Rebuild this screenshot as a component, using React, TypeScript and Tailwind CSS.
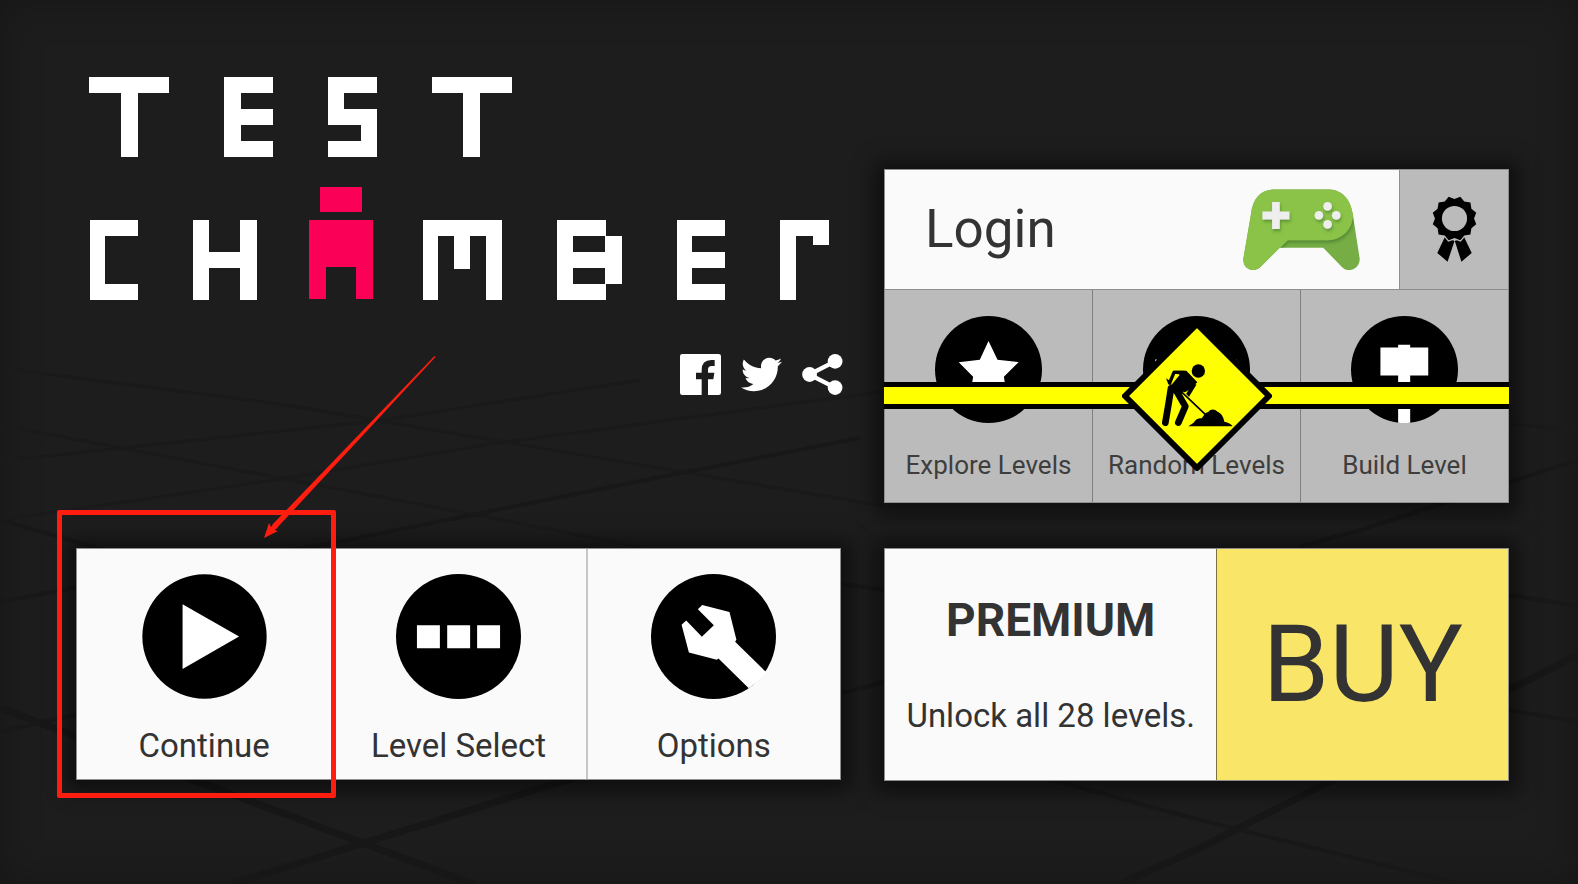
import type { ReactNode } from "react";
import { FaTwitter } from "react-icons/fa";

type Block = [x: number, y: number, w: number, h: number];

/* Block wordmark, laid out on a 16-unit stroke. */
const WHITE_BLOCKS: Block[] = [
  // T
  [89, 77, 80, 16], [121, 92, 17, 65],
  // E
  [224, 77, 17, 80], [224, 77, 49, 16], [224, 109, 49, 16], [224, 141, 49, 16],
  // S
  [328, 77, 48, 16], [328, 77, 16, 48], [328, 109, 48, 16], [361, 109, 16, 48], [328, 141, 48, 16], [361, 77, 16, 16],
  // T
  [432, 77, 80, 16], [463, 92, 17, 65],
  // C
  [90, 220, 15, 80], [90, 220, 48, 16], [90, 284, 48, 16],
  // H
  [193, 220, 16, 80], [240, 220, 17, 80], [193, 252, 64, 16],
  // M
  [423, 220, 79, 16], [423, 220, 15, 80], [454, 220, 16, 49], [486, 220, 16, 80],
  // B
  [557, 220, 16, 80], [557, 220, 49, 16], [557, 252, 49, 16], [557, 284, 49, 16], [605, 236, 17, 48],
  // E
  [677, 220, 15, 80], [677, 220, 48, 16], [677, 252, 48, 16], [677, 284, 48, 16],
  // R
  [780, 220, 16, 80], [780, 220, 49, 16], [813, 220, 16, 25],
];

const PINK_BLOCKS: Block[] = [
  [320, 187, 42, 25],
  [309, 220, 64, 47],
  [309, 220, 17, 79],
  [356, 220, 17, 79],
];

function Logo() {
  return (
    <h1 aria-label="Test Chamber">
      <svg viewBox="89 76 740 224" className="block h-auto w-full" shapeRendering="crispEdges" aria-hidden="true">
        {WHITE_BLOCKS.map(([x, y, w, h], i) => (
          <rect key={i} x={x} y={y} width={w} height={h} fill="#fff" />
        ))}
        {PINK_BLOCKS.map(([x, y, w, h], i) => (
          <rect key={i} x={x} y={y} width={w} height={h} fill="#fa0056" />
        ))}
      </svg>
    </h1>
  );
}

/* Faint perspective grid on the floor of the chamber. */
function Floor() {
  return (
    <svg
      viewBox="0 0 1578 884"
      preserveAspectRatio="none"
      className="pointer-events-none absolute inset-0 h-full w-full"
      fill="none"
      stroke="#171717"
      aria-hidden="true"
    >
      <g strokeWidth="7">
        <path d="M0 708L473 884M232 884L554 784L760 722" />
        <path d="M1120 884L1200 848L1327 783L1509 690L1578 655" />
      </g>
      <g strokeWidth="4" stroke="#181818">
        <path d="M1000 766L1200 820L1460 884M0 732L74 715L300 655M1509 710L1578 722" />
        <path d="M0 520L94 547L250 590M0 602L74 588L348 540L620 485L860 438" />
        <path d="M1509 595L1578 606M842 693L884 682M842 584L884 590M1300 547L1360 530L1510 482L1578 460" />
      </g>
      <g strokeWidth="3" stroke="#1a1a1a">
        <path d="M0 425L280 478L482 516L640 547M0 520L268 481L491 444L700 416L880 392" />
        <path d="M0 461L384 420L640 380M0 368L280 404L700 475L884 506" />
        <path d="M1509 424L1578 430" />
      </g>
    </svg>
  );
}

function FacebookIcon() {
  return (
    <svg viewBox="840 552 123 123" className="size-[41px]" aria-hidden="true">
      <rect x="840" y="552" width="123" height="123" rx="7" fill="#fff" />
      <path
        fill="#1c1c1c"
        d="M905 608v-8q0-30 29-30h10v18h-9q-11 0-11 11v9h19l-3 20h-16v47h-19v-47h-17v-20z"
      />
    </svg>
  );
}

function ShareIcon() {
  return (
    <svg viewBox="1205 553 121 122" className="size-[41px]" aria-hidden="true">
      <path d="M1303 575L1226 614L1303 653" fill="none" stroke="#fff" strokeWidth="13" />
      <circle cx="1303" cy="575" r="22" fill="#fff" />
      <circle cx="1227" cy="614" r="22" fill="#fff" />
      <circle cx="1303" cy="653" r="22" fill="#fff" />
    </svg>
  );
}

function PlayIcon() {
  return (
    <svg viewBox="0 0 376 376" className="size-[125px]" aria-hidden="true">
      <circle cx="188" cy="188" r="187" />
      <path d="M122 91L292 188L122 286z" fill="#fff" />
    </svg>
  );
}

function LevelsIcon() {
  return (
    <svg viewBox="0 0 376 376" className="size-[125px]" aria-hidden="true">
      <circle cx="188" cy="188" r="188" />
      <path d="M63 154h69v69h-69zM154 154h69v69h-69zM244 154h69v69h-69z" fill="#fff" />
    </svg>
  );
}

function WrenchIcon() {
  return (
    <svg viewBox="631 132 376 376" className="size-[125px]" aria-hidden="true">
      <circle cx="819" cy="320" r="188" />
      <path
        fill="#fff"
        d="M785 225L867 246L888 330L884 336L977 427Q955 457 925 476L834 386L829 390L745 368L723 285L737 272L784 321L820 286L772 238z"
      />
    </svg>
  );
}

function StarIcon() {
  return (
    <svg viewBox="0 0 320 320" className="size-[107px]" aria-hidden="true">
      <circle cx="160" cy="160" r="160" />
      <path fill="#fff" d="M160 75L187 131L250 138L206 182L216 244L160 214L104 244L114 182L71 138L134 131z" />
    </svg>
  );
}

function RandomIcon() {
  return (
    <svg viewBox="0 0 320 320" className="size-[107px]" aria-hidden="true">
      <circle cx="160" cy="160" r="160" />
      <path fill="#ccc" d="M36 130h7l-6 7zM274 130h7v8z" />
    </svg>
  );
}

function BuildIcon() {
  return (
    <svg viewBox="0 0 320 320" className="size-[107px]" aria-hidden="true">
      <circle cx="160" cy="160" r="160" />
      <path fill="#fff" d="M141 86h36v8h54v84h-54v141q-18 2-36 0V178H88V94h53z" />
    </svg>
  );
}

function GamepadIcon() {
  return (
    <svg viewBox="128 117 350 244" className="w-[117px]" aria-hidden="true">
      <defs>
        <filter id="pad-shadow" x="-20%" y="-20%" width="150%" height="150%">
          <feDropShadow dx="3" dy="7" stdDeviation="5" floodColor="#33691e" floodOpacity="0.5" />
        </filter>
        <clipPath id="pad-clip">
          <path d="M152 190C158 140 185 118 225 118H382C425 118 450 150 456 190L477 325C479 354 445 372 424 350L368 293H238L180 350C158 370 126 356 129 325z" />
        </clipPath>
      </defs>
      <g clipPath="url(#pad-clip)">
        <path fill="#76ad45" d="M120 110h370v260H120z" />
        <path
          fill="#8bc34a"
          filter="url(#pad-shadow)"
          d="M152 190C158 140 185 118 225 118H382C432 118 457 160 457 194C457 236 425 270 382 270H262L180 350C158 370 126 356 129 325z"
        />
      </g>
      <g fill="#eee" filter="url(#pad-shadow)">
        <path d="M215 156h23v28h29v24h-29v29h-23v-29h-29v-24h29z" />
        <circle cx="381" cy="169" r="13" />
        <circle cx="355" cy="196" r="13" />
        <circle cx="407" cy="196" r="13" />
        <circle cx="381" cy="223" r="13" />
      </g>
    </svg>
  );
}

const ROSETTE = Array.from({ length: 24 }, (_, i) => {
  const angle = ((i * 15 - 90) * Math.PI) / 180;
  const r = i % 2 === 1 ? 68 : 59;
  return `${(131 + r * Math.cos(angle)).toFixed(1)},${(104 + r * Math.sin(angle)).toFixed(1)}`;
}).join(" ");

function AwardIcon() {
  return (
    <svg viewBox="60 36 142 202" className="w-[47px]" aria-hidden="true">
      <path d="M102 160L131 172L110 235L79 208zM160 160L132 172L152 235L183 208z" />
      <polygon points={ROSETTE} stroke="#bbb" strokeWidth="8" />
      <polygon points={ROSETTE} />
      <circle cx="131" cy="104" r="38" fill="#bbb" />
    </svg>
  );
}

function RoadworkSign() {
  return (
    <svg viewBox="63 30 450 453" className="h-[151px] w-[150px]" aria-hidden="true">
      <path d="M288 42L504 258L288 474L72 258z" fill="#ff0" stroke="#000" strokeWidth="18" strokeLinejoin="round" />
      <g transform="translate(150 135)">
        <circle cx="142" cy="48" r="20" />
        <path d="M66 47H106L139 82L112 106L84 122L50 106L66 84L86 60z" />
        <path d="M45 70L52 74L58 78L62 90L52 88z" />
        <g fill="none" stroke="#000" strokeLinejoin="round">
          <path d="M56 84L69 52H100" strokeWidth="10" strokeLinecap="round" />
          <path d="M131 86L108 124" strokeWidth="12" />
          <path d="M60 100L53 145L43 203" strokeWidth="20" strokeLinecap="round" />
          <path d="M74 104L103 154L82 203" strokeWidth="20" strokeLinecap="round" />
          <path d="M96 112L166 184" stroke="#ff0" strokeWidth="7" />
          <path d="M94 113L166 181" strokeWidth="5" />
        </g>
        <path d="M112 214L128 203Q136 189 152 190L164 174Q172 172 178 165Q190 161 200 170Q216 176 220 200Q238 203 245 214z" />
      </g>
    </svg>
  );
}

/* Red marker that points at the first tile. */
function Highlight() {
  return (
    <>
      <span className="pointer-events-none absolute -top-[39px] -right-[5px] -bottom-[19px] -left-[20px] z-10 rounded-xs border-[5px] border-[#ff1d10]" />
      <svg
        viewBox="0 0 173 184"
        className="pointer-events-none absolute -top-[194px] left-[186px] z-10 h-[184px] w-[173px]"
        fill="#ff1d10"
        aria-hidden="true"
      >
        <path d="M171.500 1L172.500 2L13 174L9 170z" />
        <path d="M1 183L6 168L8 172L12 168L15 172L11.500 175L15 176z" />
      </svg>
    </>
  );
}

function Tile({ label, icon, className = "", children }: { label: string; icon: ReactNode; className?: string; children?: ReactNode }) {
  return (
    <div className="relative flex-1">
      <button
        type="button"
        className={`flex h-full w-full flex-col items-center bg-[#fafafa] pt-[25px] text-[33px] leading-10 text-[#333] ${className}`}
      >
        {icon}
        <span className="mt-[27px]">{label}</span>
      </button>
      {children}
    </div>
  );
}

function SmallTile({ label, icon, className = "" }: { label: string; icon: ReactNode; className?: string }) {
  return (
    <button
      type="button"
      className={`flex flex-1 flex-col items-center bg-[#bbb] pt-[26px] text-[26px] leading-8 text-[#3e3e3e] ${className}`}
    >
      {icon}
      <span className="mt-[26px] whitespace-nowrap">{label}</span>
    </button>
  );
}

const PANEL = "border border-[#8e8e8e] shadow-[0_2px_18px_9px_rgba(0,0,0,0.5)]";

export default function App() {
  return (
    <main className="relative min-h-screen overflow-hidden bg-[#1d1d1d] pt-[76px] pr-[69px] pb-[103px] pl-[76px] font-[Roboto,sans-serif] shadow-[inset_0_0_40px_rgba(0,0,0,0.25)]">
      <Floor />
      <div className="relative grid grid-cols-[765fr_625fr] gap-x-[43px] gap-y-[45px]">
        <header className="pb-[108px]">
          <div className="pr-3 pl-[13px]">
            <Logo />
          </div>
          <nav aria-label="Social" className="-mr-0.5 mt-[54px] flex items-center justify-end gap-5">
            <button type="button" aria-label="Facebook">
              <FacebookIcon />
            </button>
            <button type="button" aria-label="Twitter">
              <FaTwitter className="size-[41px] text-white" aria-hidden="true" />
            </button>
            <button type="button" aria-label="Share">
              <ShareIcon />
            </button>
          </nav>
        </header>

        <section className={`flex h-[334px] flex-col self-end ${PANEL}`}>
          <div className="flex h-[120px] border-b border-[#8e8e8e]">
            <button
              type="button"
              className="flex flex-1 items-center justify-between bg-[#fafafa] pt-px pr-[39px] pl-10 text-[53px] text-[#333]"
            >
              <span>Login</span>
              <GamepadIcon />
            </button>
            <button
              type="button"
              aria-label="Achievements"
              className="flex w-[109px] items-center justify-center border-l border-[#8e8e8e] bg-[#bbb]"
            >
              <AwardIcon />
            </button>
          </div>
          <div className="relative flex flex-1">
            <SmallTile label="Explore Levels" icon={<StarIcon />} />
            <SmallTile label="Random Levels" icon={<RandomIcon />} className="border-x border-[#808080]" />
            <SmallTile label="Build Level" icon={<BuildIcon />} />
            <div className="pointer-events-none absolute -inset-x-px top-[92px] flex h-[27px] items-center justify-center border-y-[5px] border-black bg-[#ff0]">
              <div className="shrink-0">
                <RoadworkSign />
              </div>
            </div>
          </div>
        </section>

        <section className={`flex h-[232px] ${PANEL}`}>
          <Tile label="Continue" icon={<PlayIcon />}>
            <Highlight />
          </Tile>
          <Tile label="Level Select" icon={<LevelsIcon />} />
          <Tile label="Options" icon={<WrenchIcon />} className="border-l-2 border-[#c6c6c6]" />
        </section>

        <section className={`flex h-[233px] ${PANEL}`}>
          <div className="flex flex-[332] flex-col items-center bg-[#fafafa] pt-[43px] text-[#333]">
            <h2 className="text-[46px] leading-[56px] font-bold">PREMIUM</h2>
            <p className="mt-12 text-[33px] leading-10 whitespace-nowrap">Unlock all 28 levels.</p>
          </div>
          <button
            type="button"
            className="flex-[291] border-l border-[#7a7340] bg-[#f9e568] text-[107px] leading-none text-[#333]"
          >
            BUY
          </button>
        </section>
      </div>
    </main>
  );
}
